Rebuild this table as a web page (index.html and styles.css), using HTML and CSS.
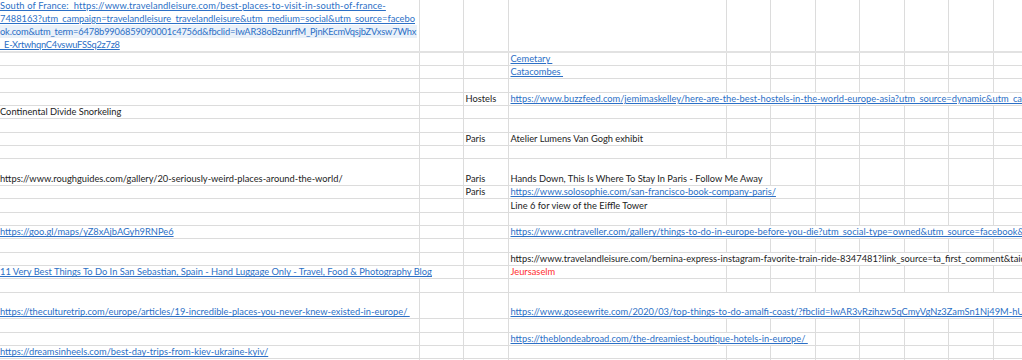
FILE: index.html
```html
<!DOCTYPE html>
<html lang="en">
<head>
    <meta charset="UTF-8">
    <meta name="viewport" content="width=device-width, initial-scale=1.0">
    <title>Travel Ideas</title>
    <link rel="stylesheet" href="styles.css">
</head>
<body>
    <table class="sheet">
        <colgroup>
            <col class="col-a"><col class="col-b"><col class="col-c"><col class="col-d">
            <col class="col-n"><col class="col-n"><col class="col-n"><col class="col-n">
            <col class="col-n"><col class="col-n"><col class="col-n">
        </colgroup>
        <tr class="tall">
            <td class="wrap">
                <div class="clip">
                    <div class="link"><span class="wide">South of France:&nbsp; https://www.travelandleisure.com/best-places-to-visit-in-south-of-france-</span><br>7488163?utm_campaign=travelandleisure_travelandleisure&amp;utm_medium=social&amp;utm_source=facebo<br><span class="hl">ok.com&amp;utm_term=6478b9906859090001c4756d&amp;fbclid=IwAR38oBzunrfM_PjnKEcmVqsjbZVxsw7Whx</span><br><span class="narrow">_E-XrtwhqnC4vswuFSSq2z7z8</span></div>
                </div>
            </td>
            <td></td><td></td><td></td><td></td><td></td><td></td><td></td><td></td><td></td><td></td>
        </tr>
        <tr>
            <td></td><td></td><td></td><td><span class="link">Cemetary&nbsp;</span></td>
            <td></td><td></td><td></td><td></td><td></td><td></td><td></td>
        </tr>
        <tr>
            <td></td><td></td><td></td><td><span class="link">Catacombes&nbsp;</span></td>
            <td></td><td></td><td></td><td></td><td></td><td></td><td></td>
        </tr>
        <tr>
            <td></td><td></td><td></td><td></td><td></td><td></td><td></td><td></td><td></td><td></td><td></td>
        </tr>
        <tr>
            <td></td><td></td><td>Hostels</td>
            <td colspan="8"><span class="link">https://www.buzzfeed.com/jemimaskelley/here-are-the-best-hostels-in-the-world-europe-asia?utm_source=dynamic&amp;utm_campaign=bfsharefacebook</span></td>
        </tr>
        <tr>
            <td>Continental Divide Snorkeling</td>
            <td></td><td></td><td></td><td></td><td></td><td></td><td></td><td></td><td></td><td></td>
        </tr>
        <tr>
            <td></td><td></td><td></td><td></td><td></td><td></td><td></td><td></td><td></td><td></td><td></td>
        </tr>
        <tr>
            <td></td><td></td><td>Paris</td><td>Atelier Lumens Van Gogh exhibit</td>
            <td></td><td></td><td></td><td></td><td></td><td></td><td></td>
        </tr>
        <tr>
            <td></td><td></td><td></td><td></td><td></td><td></td><td></td><td></td><td></td><td></td><td></td>
        </tr>
        <tr class="double">
            <td>https://www.roughguides.com/gallery/20-seriously-weird-places-around-the-world/</td>
            <td></td><td>Paris</td>
            <td colspan="2">Hands Down, This Is Where To Stay In Paris - Follow Me Away</td>
            <td></td><td></td><td></td><td></td><td></td><td></td>
        </tr>
        <tr>
            <td></td><td></td><td>Paris</td>
            <td colspan="3"><span class="link">https://www.solosophie.com/san-francisco-book-company-paris/</span></td>
            <td></td><td></td><td></td><td></td><td></td>
        </tr>
        <tr>
            <td></td><td></td><td></td><td>Line 6 for view of the Eiffle Tower</td>
            <td></td><td></td><td></td><td></td><td></td><td></td><td></td>
        </tr>
        <tr>
            <td></td><td></td><td></td><td></td><td></td><td></td><td></td><td></td><td></td><td></td><td></td>
        </tr>
        <tr>
            <td><span class="link">https://goo.gl/maps/yZ8xAjbAGyh9RNPe6</span></td>
            <td></td><td></td>
            <td colspan="8"><span class="link">https://www.cntraveller.com/gallery/things-to-do-in-europe-before-you-die?utm_social-type=owned&amp;utm_source=facebook&amp;utm_medium=social</span></td>
        </tr>
        <tr>
            <td></td><td></td><td></td><td></td><td></td><td></td><td></td><td></td><td></td><td></td><td></td>
        </tr>
        <tr>
            <td></td><td></td><td></td>
            <td colspan="8">https://www.travelandleisure.com/bernina-express-instagram-favorite-train-ride-8347481?link_source=ta_first_comment&amp;taid=5e8c1a</td>
        </tr>
        <tr>
            <td colspan="2"><span class="link">11 Very Best Things To Do In San Sebastian, Spain - Hand Luggage Only - Travel, Food &amp; Photography Blog</span></td>
            <td></td><td class="alert">Jeursaselm</td>
            <td></td><td></td><td></td><td></td><td></td><td></td><td></td>
        </tr>
        <tr>
            <td></td><td></td><td></td><td></td><td></td><td></td><td></td><td></td><td></td><td></td><td></td>
        </tr>
        <tr class="double">
            <td><span class="link">https://theculturetrip.com/europe/articles/19-incredible-places-you-never-knew-existed-in-europe/&nbsp;</span></td>
            <td></td><td></td>
            <td colspan="8"><span class="link">https://www.goseewrite.com/2020/03/top-things-to-do-amalfi-coast/?fbclid=IwAR3vRzihzw5qCmyVgNz3ZamSn1Nj49M-hUDx4</span></td>
        </tr>
        <tr>
            <td></td><td></td><td></td><td></td><td></td><td></td><td></td><td></td><td></td><td></td><td></td>
        </tr>
        <tr>
            <td></td><td></td><td></td>
            <td colspan="3"><span class="link">https://theblondeabroad.com/the-dreamiest-boutique-hotels-in-europe/&nbsp;</span></td>
            <td></td><td></td><td></td><td></td><td></td>
        </tr>
        <tr>
            <td><span class="link">https://dreamsinheels.com/best-day-trips-from-kiev-ukraine-kyiv/</span></td>
            <td></td><td></td><td></td><td></td><td></td><td></td><td></td><td></td><td></td><td></td>
        </tr>
        <tr>
            <td></td><td></td><td></td><td></td><td></td><td></td><td></td><td></td><td></td><td></td><td></td>
        </tr>
    </table>
</body>
</html>
```

FILE: styles.css
```css
body {
    margin: 0;
    width: 1022px;
    height: 360px;
    overflow: hidden;
    background: #fff;
    font-family: Lato, 'Liberation Sans', sans-serif;
    font-size: 9.3px;
    color: #1c1c1c;
}
.sheet {
    border-collapse: collapse;
    table-layout: fixed;
    width: 1038px;
}
.col-a { width: 419px; }
.col-b { width: 44px; }
.col-c { width: 45px; }
.col-d { width: 218px; }
.col-n { width: 44.6px; }
.sheet tr {
    height: 13.33px;
}
.sheet tr.tall {
    height: 52px;
}
.sheet tr.double {
    height: 26.67px;
}
.sheet td {
    border: 1px solid #dcdcdc;
    padding: 0 2px 1px 2px;
    line-height: 11px;
    vertical-align: bottom;
    white-space: nowrap;
    overflow: hidden;
}
.sheet td:first-child {
    padding-left: 0;
    border-left: none;
}
.sheet tr.tall td {
    border-top: none;
    border-bottom: 2px solid #e2e2e2;
}
.sheet td.wrap {
    padding: 0;
}
/* wrapped cell: bottom aligned, top line cut by the window */
.clip {
    height: 51px;
    overflow: hidden;
    display: flex;
    flex-direction: column;
    justify-content: flex-end;
    line-height: 13.1px;
}
.wide {
    letter-spacing: 0.14px;
}
.narrow {
    letter-spacing: -0.25px;
}
.link {
    color: #2b6fc6;
    text-decoration: underline;
    text-underline-offset: 1px;
}
.hl {
    display: inline-block;
    width: 417px;
    letter-spacing: -0.18px;
    background: #eaf1f9;
}
.alert {
    color: #ff2e2e;
}
```
